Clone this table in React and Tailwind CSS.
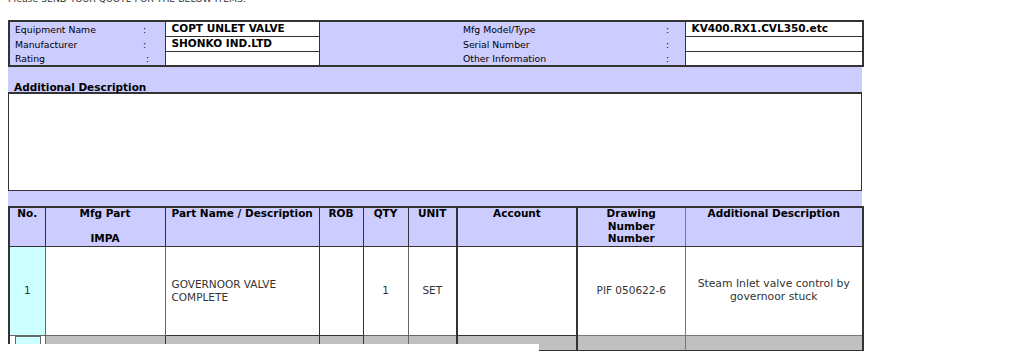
const lav = 'bg-[#ccccff]';

function HeaderInfo() {
  return (
    <table className={`w-[854px] border-collapse border-2 border-[#333] ${lav} table-fixed`}>
      <colgroup>
        <col className="w-[134px]" />
        <col className="w-[22px]" />
        <col className="w-[154px]" />
        <col className="w-[144px]" />
        <col className="w-[200px]" />
        <col className="w-[22px]" />
        <col className="w-[178px]" />
      </colgroup>
      <tbody>
        {[
          ['Equipment Name', 'COPT UNLET VALVE', 'Mfg Model/Type', 'KV400.RX1.CVL350.etc'],
          ['Manufacturer', 'SHONKO IND.LTD', 'Serial Number', ''],
          ['Rating', '', 'Other Information', ''],
        ].map(([l1, v1, l2, v2], i) => (
          <tr key={i} className="h-[15px]">
            <td className="pl-[5px] leading-[13px] text-[9.3px] pt-[1px]">{l1}</td>
            <td className={`leading-[13px] text-[9.3px] pt-[1px] ${i === 2 ? 'pl-[3px]' : ''}`}>:</td>
            <td className="bg-white border border-[#333] pl-[6px] font-bold leading-[13px]">{v1}</td>
            <td />
            <td className="leading-[13px] text-[9.3px] pt-[1px]">{l2}</td>
            <td className="leading-[13px] text-[9.3px] pt-[1px] pl-[3px]">:</td>
            <td className="bg-white border border-[#333] pl-[6px] font-bold leading-[13px]">{v2}</td>
          </tr>
        ))}
      </tbody>
    </table>
  );
}

const headCell = 'border border-[#333] align-top text-center font-bold p-0';

function Head({ children, className = '' }) {
  return <div className={`-mt-[1px] leading-[12.5px] ${className}`}>{children}</div>;
}

function ItemsTable() {
  return (
    <table className="w-[854px] border-collapse border-2 border-[#333] table-fixed">
      <colgroup>
        <col className="w-[36px]" />
        <col className="w-[120px]" />
        <col className="w-[154px]" />
        <col className="w-[44px]" />
        <col className="w-[45px]" />
        <col className="w-[49px]" />
        <col className="w-[120px]" />
        <col className="w-[108px]" />
        <col className="w-[178px]" />
      </colgroup>
      <thead>
        <tr className={`h-[39px] ${lav}`}>
          <th className={headCell}><Head>No.</Head></th>
          <th className={headCell}><Head>Mfg Part<br /><br />IMPA</Head></th>
          <th className={`${headCell} text-left`}><Head className="pl-[6px]">Part Name / Description</Head></th>
          <th className={headCell}><Head>ROB</Head></th>
          <th className={headCell}><Head>QTY</Head></th>
          <th className={`${headCell} border-r-2`}><Head>UNIT</Head></th>
          <th className={`${headCell} border-r-2`}><Head>Account</Head></th>
          <th className={`${headCell} border-r-[#777]`}><Head>Drawing<br />Number<br />Number</Head></th>
          <th className={headCell}><Head>Additional Description</Head></th>
        </tr>
      </thead>
      <tbody className="text-[#333]">
        <tr className="h-[89px]">
          <td className="border border-[#666] bg-[#ccffff] text-center">1</td>
          <td className="border border-[#666]" />
          <td className="border border-[#333] pl-[6px] leading-[12.5px]">GOVERNOOR VALVE<br />COMPLETE</td>
          <td className="border border-[#333]" />
          <td className="border border-[#666] text-center">1</td>
          <td className="border border-[#666] border-r-2 border-r-[#333] text-center">SET</td>
          <td className="border border-[#333] border-r-2" />
          <td className="border border-[#777] text-center">PIF 050622-6</td>
          <td className="border border-[#777] text-center leading-[12.5px] px-[2px] text-[10.8px]">
            Steam Inlet valve control by governoor stuck
          </td>
        </tr>
        <tr className="h-[16px] bg-[#c0c0c0]">
          <td className="bg-white border-r border-[#666] p-0 align-top">
            <div className="ml-[5px] w-[26px] h-[12px] bg-[#ccffff] border border-[#666]" />
          </td>
          <td className="border-r border-[#333]" />
          <td className="border-r border-[#333]" />
          <td className="border-r border-[#333]" />
          <td className="border-r border-[#666]" />
          <td className="border-r-2 border-[#333]" />
          <td className="border-r-2 border-[#333]" />
          <td className="border-r border-[#777]" />
          <td />
        </tr>
      </tbody>
    </table>
  );
}

export default function App() {
  return (
    <div className="relative h-[351px] overflow-hidden bg-white text-[10.5px] text-black font-['DejaVu_Sans',Verdana,sans-serif]">
      <div className="pl-[8px] -mt-[7px] leading-[12px] text-[9.3px] text-[#333]">
        Please SEND YOUR QUOTE FOR THE BELOW ITEMS.
      </div>
      <div className="pl-[8px] mt-[15px]">
        <HeaderInfo />
        <div className={`w-[854px] h-[27px] ${lav} border-b-2 border-[#333] pt-[14px] pl-[6px] leading-[12px] font-bold`}>
          Additional Description
        </div>
        <div className="w-[854px] h-[97px] border-x border-b border-[#333] bg-white" />
        <div className={`w-[854px] h-[15px] ${lav}`} />
        <ItemsTable />
      </div>
      <div className="absolute left-0 top-[344px] w-[539px] h-[8px] bg-white" />
    </div>
  );
}
